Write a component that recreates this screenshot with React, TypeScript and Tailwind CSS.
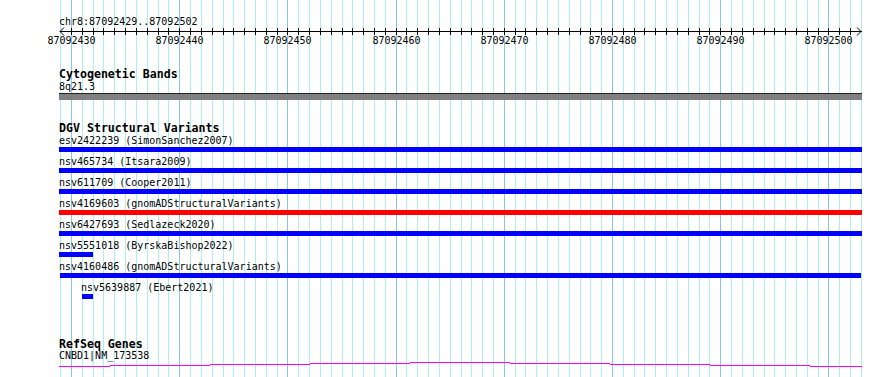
const PX = 10.82;
const X0 = 60.2;
const BASE = 87092429;
const gx = (k: number) => Math.round(X0 + k * PX) + 0.5;

const ks = Array.from({ length: 75 }, (_, i) => i);

type Variant = {
  label: string;
  labelClass: string;
  barClass: string;
};

const variants: Variant[] = [
  { label: 'esv2422239 (SimonSanchez2007)', labelClass: '', barClass: 'w-[803px] bg-[#0000ff]' },
  { label: 'nsv465734 (Itsara2009)', labelClass: '', barClass: 'w-[803px] bg-[#0000ff]' },
  { label: 'nsv611709 (Cooper2011)', labelClass: '', barClass: 'w-[803px] bg-[#0000ff]' },
  { label: 'nsv4169603 (gnomADStructuralVariants)', labelClass: '', barClass: 'w-[803px] bg-[#ff0000]' },
  { label: 'nsv6427693 (Sedlazeck2020)', labelClass: '', barClass: 'w-[803px] bg-[#0000ff]' },
  { label: 'nsv5551018 (ByrskaBishop2022)', labelClass: '', barClass: 'w-[34px] bg-[#0000ff]' },
  { label: 'nsv4160486 (gnomADStructuralVariants)', labelClass: '', barClass: 'ml-[1px] w-[801px] bg-[#0000ff]' },
  { label: 'nsv5639887 (Ebert2021)', labelClass: 'ml-[22px]', barClass: 'ml-[23px] w-[11px] bg-[#0000ff]' },
];

// stepped intron line of the gene model: [x1, x2, row]
const geneSteps: [number, number, number][] = [
  [59, 110, 4],
  [110, 210, 3],
  [210, 310, 2],
  [310, 410, 1],
  [410, 510, 0],
  [510, 610, 1],
  [610, 710, 2],
  [710, 810, 3],
  [810, 862, 4],
];

function Backdrop() {
  return (
    <svg
      className="absolute inset-0 pointer-events-none"
      width={890}
      height={377}
      viewBox="0 0 890 377"
      shapeRendering="crispEdges"
    >
      {ks.map((k) => (
        <line
          key={k}
          x1={gx(k)}
          x2={gx(k)}
          y1={0}
          y2={377}
          stroke={k % 10 === 1 ? '#87c6ea' : '#afeeee'}
          strokeWidth={1}
        />
      ))}

      {/* ruler */}
      <line x1={60} x2={862} y1={31.5} y2={31.5} stroke="#000" />
      {ks.slice(1, 74).map((k) => (
        <line key={k} x1={gx(k)} x2={gx(k)} y1={28} y2={35} stroke="#000" />
      ))}
      <g shapeRendering="auto" stroke="#000" strokeWidth={1} fill="none">
        <polyline points="64,27.5 60,31.5 64,35.5" />
        <polyline points="857,27.5 861,31.5 857,35.5" />
      </g>
      {ks
        .filter((k) => k % 10 === 1)
        .map((k) => (
          <text
            key={k}
            x={gx(k)}
            y={44}
            textAnchor="middle"
            fontFamily="'DejaVu Sans Mono', monospace"
            fontSize={10}
            fill="#000"
          >
            {BASE + k}
          </text>
        ))}
    </svg>
  );
}

export default function App() {
  return (
    <div className="relative w-[890px] h-[377px] overflow-hidden bg-white text-black font-['DejaVu_Sans_Mono',monospace]">
      <Backdrop />

      <div className="relative flex flex-col pl-[59px] text-[10px] whitespace-nowrap">
        <div className="pt-[16px] leading-[12px] h-[29px]">chr8:87092429..87092502</div>

        {/* Cytogenetic Bands */}
        <div className="mt-[39px] h-[13px] leading-[13px] text-[11.6px] font-bold">
          Cytogenetic Bands
        </div>
        <div className="h-[12px] leading-[12px]">8q21.3</div>
        <div className="w-[803px] h-[7px] border-t border-[#222222] bg-[#808080]" />

        {/* DGV Structural Variants */}
        <div className="mt-[22px] h-[13px] leading-[13px] text-[11.6px] font-bold">
          DGV Structural Variants
        </div>
        <div className="flex flex-col gap-[4px]">
          {variants.map((v) => (
            <div key={v.label} className="flex flex-col">
              <div className={`h-[12px] leading-[12px] ${v.labelClass}`}>{v.label}</div>
              <div className={`h-[5px] ${v.barClass}`} />
            </div>
          ))}
        </div>

        {/* RefSeq Genes */}
        <div className="mt-[39px] h-[12px] leading-[12px] text-[11.6px] font-bold">
          RefSeq Genes
        </div>
        <div className="h-[12px] leading-[12px]">CNBD1|NM_173538</div>
        <svg
          className="-ml-[59px] block"
          width={890}
          height={6}
          viewBox="0 0 890 6"
          shapeRendering="crispEdges"
        >
          {geneSteps.map(([a, b, r]) => (
            <rect key={a} x={a} y={r} width={b - a} height={1} fill="#ff00ff" />
          ))}
        </svg>
      </div>
    </div>
  );
}
